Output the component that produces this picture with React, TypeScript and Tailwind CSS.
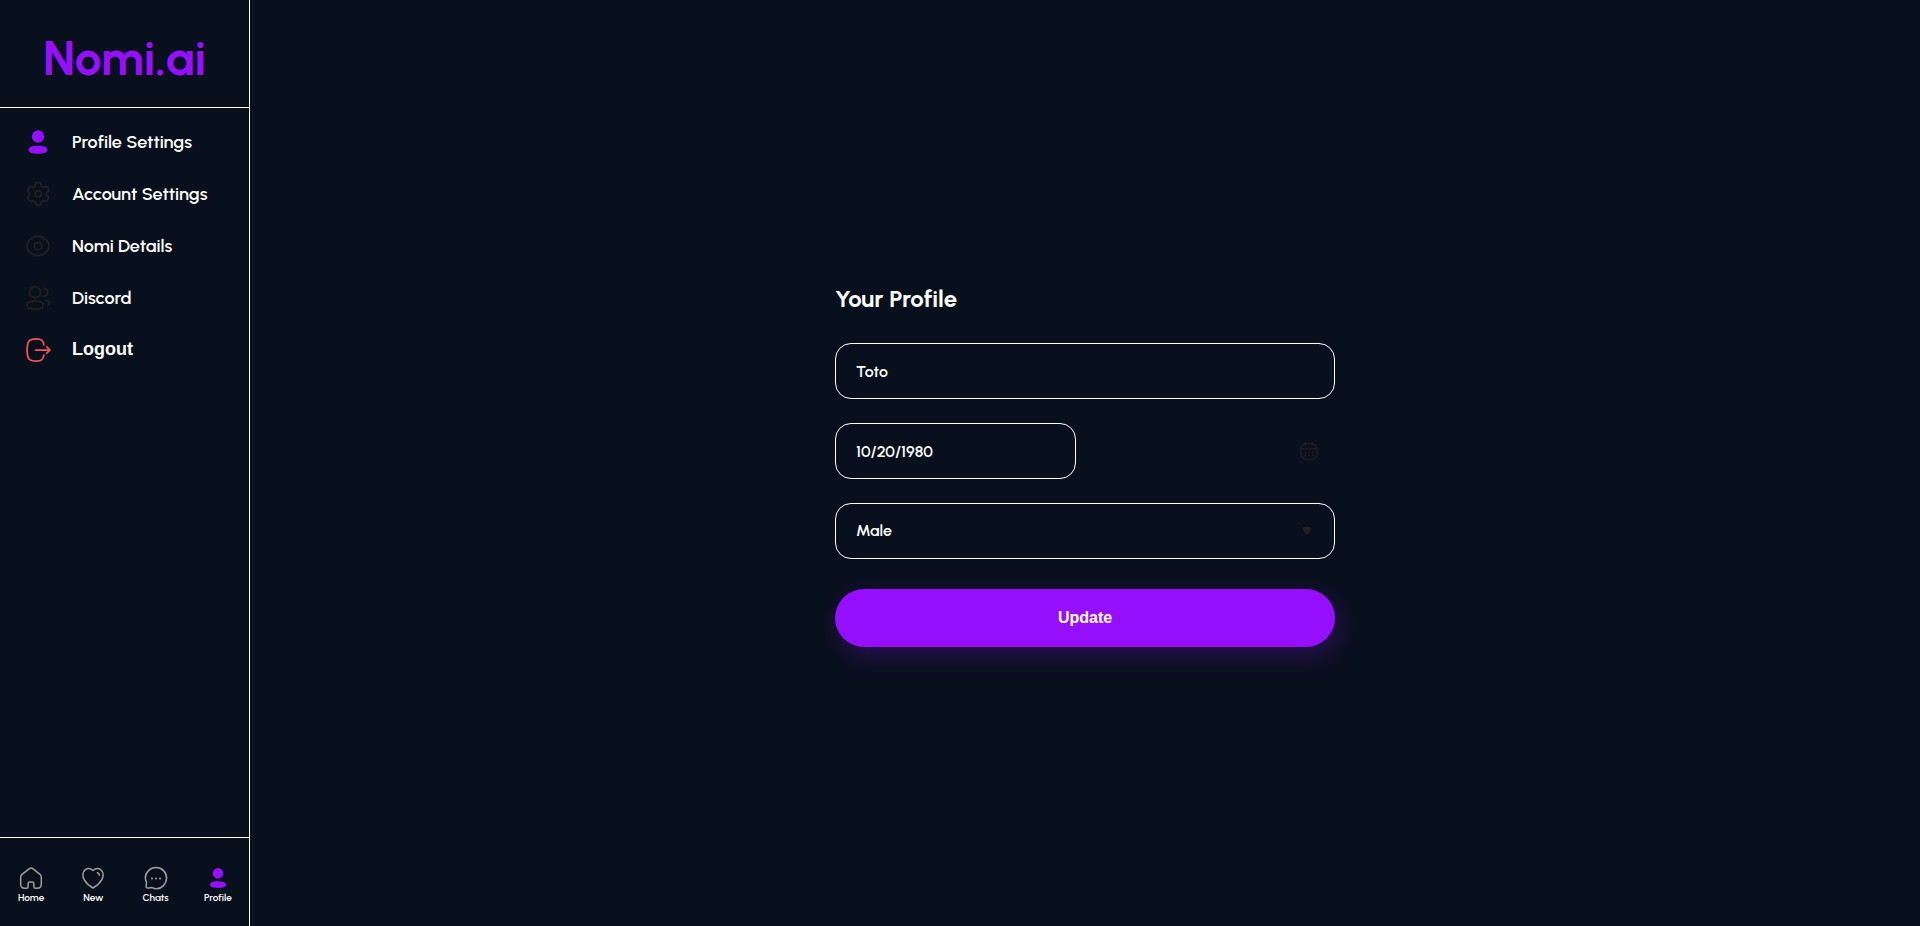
import { useState, type ReactNode } from "react";

type IconProps = { className?: string };

function Icon({ className, children }: IconProps & { children: ReactNode }) {
  return (
    <svg
      viewBox="0 0 24 24"
      fill="none"
      stroke="currentColor"
      strokeWidth="1.5"
      strokeLinecap="round"
      strokeLinejoin="round"
      aria-hidden="true"
      className={className}
    >
      {children}
    </svg>
  );
}

const ProfileIcon = ({ className }: IconProps) => (
  <Icon className={className}>
    <g fill="currentColor" stroke="none">
      <circle cx="12" cy="7.3" r="5.3" />
      <path d="M12 15.2c-4.3 0-8 .7-8 3.4S7.700 22 12 22s8-.7 8-3.400-3.700-3.400-8-3.400Z" />
    </g>
  </Icon>
);

const GearIcon = ({ className }: IconProps) => (
  <Icon className={className}>
    <path d="M20.8064 7.62361L20.184 6.54352C19.6574 5.6296 18.4905 5.31432 17.5753 5.83872C17.1397 6.09534 16.6198 6.16815 16.1305 6.04109C15.6411 5.91402 15.2224 5.59752 14.9666 5.16137C14.8021 4.88415 14.7137 4.56839 14.7103 4.24604C14.7251 3.72922 14.5302 3.2284 14.1698 2.85767C13.8094 2.48694 13.3143 2.27786 12.7973 2.27808H11.5433C11.0367 2.27807 10.5511 2.47991 10.1938 2.83895C9.83644 3.19798 9.63693 3.68459 9.63937 4.19112C9.62435 5.23693 8.77224 6.07681 7.72632 6.0767C7.40397 6.07336 7.08821 5.98494 6.81099 5.82041C5.89582 5.29601 4.72887 5.61129 4.20229 6.52522L3.5341 7.62361C3.00817 8.53639 3.31916 9.70261 4.22975 10.2323C4.82166 10.574 5.18629 11.2056 5.18629 11.8891C5.18629 12.5725 4.82166 13.2041 4.22975 13.5458C3.32031 14.0719 3.00898 15.2353 3.5341 16.1454L4.16568 17.2346C4.4124 17.6798 4.82636 18.0083 5.31595 18.1474C5.80554 18.2866 6.3304 18.2249 6.77438 17.976C7.21084 17.7213 7.73094 17.6516 8.2191 17.7822C8.70725 17.9128 9.12299 18.233 9.37392 18.6717C9.53845 18.9489 9.62686 19.2646 9.63021 19.587C9.63021 20.6435 10.4867 21.5 11.5433 21.5H12.7973C13.8502 21.5 14.7053 20.6491 14.7103 19.5962C14.7079 19.088 14.9086 18.6 15.2679 18.2407C15.6272 17.8814 16.1152 17.6807 16.6233 17.6831C16.9449 17.6917 17.2594 17.7798 17.5387 17.9394C18.4515 18.4653 19.6177 18.1544 20.1474 17.2438L20.8064 16.1454C21.0615 15.7075 21.1315 15.186 21.001 14.6964C20.8704 14.2067 20.55 13.7894 20.1108 13.5367C19.6715 13.284 19.3511 12.8666 19.2206 12.3769C19.09 11.8873 19.16 11.3658 19.4151 10.928C19.581 10.6383 19.8211 10.3982 20.1108 10.2323C21.0159 9.70289 21.3262 8.54349 20.8064 7.63277V7.62361Z" />
    <circle cx="12.175" cy="11.889" r="2.636" />
  </Icon>
);

const EyeIcon = ({ className }: IconProps) => (
  <Icon className={className}>
    <path d="M2.500 12c0-4.200 4.500-8.300 9.500-8.300s9.500 4.100 9.500 8.300-4.500 8.300-9.500 8.300S2.500 16.200 2.500 12Z" />
    <circle cx="12" cy="12" r="3.200" />
  </Icon>
);

const UsersIcon = ({ className }: IconProps) => (
  <Icon className={className}>
    <circle cx="9.500" cy="7" r="4.700" />
    <path d="M9.500 14.600c-3.800 0-7 .7-7 3.500s3.100 3.600 7 3.600 7-.8 7-3.500-3.100-3.600-7-3.600Z" />
    <path d="M17.200 10.500a3.500 3.500 0 0 0 .7-6.800" />
    <path d="M19 14.300c1.500.2 2.700.8 2.700 2 0 .9-.5 1.400-1.400 1.700" />
  </Icon>
);

const LogoutIcon = ({ className }: IconProps) => (
  <Icon className={className}>
    <path d="M17 7.700c-.3-3.700-1.700-5.200-6.700-5.200-6.200 0-7.600 2.200-7.600 9.500s1.400 9.500 7.600 9.500c5 0 6.400-1.500 6.700-5.200" />
    <path d="M22 12H9.900" />
    <path d="m19.500 9.200 2.700 2.800-2.700 2.800" />
  </Icon>
);

const HomeIcon = ({ className }: IconProps) => (
  <Icon className={className}>
    <path d="M9.100 20.700v-3.100c0-.9.7-1.600 1.600-1.600h2.600c.9 0 1.600.7 1.600 1.600v3.100c0 1 .7 1.500 1.600 1.500h1.700c2.500 0 4.100-1.500 4.100-4V11c0-1-.5-2-1.300-2.700l-6.900-5.500c-1.200-1-2.900-1-4.100 0L3.100 8.300C2.200 9 1.700 10 1.700 11v7.200c0 2.500 1.600 4 4.100 4h1.700c.9 0 1.600-.6 1.600-1.500Z" />
  </Icon>
);

const HeartIcon = ({ className }: IconProps) => (
  <Icon className={className}>
    <path d="M12 22c-3.500-2-6.700-4.700-8.700-8.100C1.500 10.700 1 6 4.100 3.800 6.500 2.100 9.800 2.400 12 4.500c2.200-2.100 5.500-2.400 7.900-.7C23 6 22.500 10.700 20.700 13.900c-2 3.400-5.200 6.100-8.700 8.100Z" />
    <path d="M16.300 6.700c1.200.3 2 1.300 2.100 2.500" />
  </Icon>
);

const ChatIcon = ({ className }: IconProps) => (
  <Icon className={className}>
    <path d="M19.500 19.600c-3.100 3.100-7.700 3.800-11.400 2-.6-.2-4.700.9-5.600.1-.9-.9.200-5 0-5.600C.7 12.300 1.400 7.700 4.500 4.600c4-4 11-4 15 0 4.100 4.100 4 10.900 0 15Z" />
    <path strokeWidth="2" d="M16 12.400h.01M12 12.400h.01M8 12.400h.01" />
  </Icon>
);

const CalendarIcon = ({ className }: IconProps) => (
  <Icon className={className}>
    <path d="M2 12.800C2 5.600 4.400 3.200 12 3.200s10 2.400 10 9.600-2.400 9.700-10 9.700-10-2.500-10-9.700Z" />
    <path d="M2.400 9.300h19.200M7.500 1.500v3.300M16.500 1.500v3.300" />
    <path strokeWidth="2" d="M16.400 13.200h.01M12 13.200h.01M7.600 13.200h.01M16.400 17.300h.01M12 17.300h.01M7.600 17.300h.01" />
  </Icon>
);

const menu = [
  { label: "Profile Settings", icon: ProfileIcon, color: "text-[#9610ff]" },
  { label: "Account Settings", icon: GearIcon, color: "text-[#212121]" },
  { label: "Nomi Details", icon: EyeIcon, color: "text-[#212121]" },
  { label: "Discord", icon: UsersIcon, color: "text-[#212121]" },
];

const tabs = [
  { label: "Home", icon: HomeIcon, color: "text-[#9e9e9e]" },
  { label: "New", icon: HeartIcon, color: "text-[#9e9e9e]" },
  { label: "Chats", icon: ChatIcon, color: "text-[#9e9e9e]" },
  { label: "Profile", icon: ProfileIcon, color: "text-[#9610ff]" },
];

const field =
  "h-14 rounded-2xl border border-white bg-transparent px-5 text-base font-semibold text-white outline-none";

export default function App() {
  const [name, setName] = useState("Toto");
  const [birthday, setBirthday] = useState("10/20/1980");
  const [gender, setGender] = useState("Male");

  return (
    <div className="flex min-h-screen bg-[#09101d] font-['Urbanist','Lato',sans-serif] text-white">
      <aside className="flex w-[250px] shrink-0 flex-col border-r border-white">
        <header className="flex h-[108px] items-center justify-center border-b border-white pt-2">
          <a href="#home" className="text-5xl font-bold text-[#9610ff]">
            Nomi.ai
          </a>
        </header>

        <nav aria-label="Settings" className="flex flex-1 flex-col gap-6 px-6 pt-5">
          {menu.map(({ label, icon: Glyph, color }) => (
            <a key={label} href="#settings" className="flex h-7 items-center gap-5">
              <Glyph className={`size-7 ${color}`} />
              <span className="text-lg leading-7 font-semibold">{label}</span>
            </a>
          ))}
          <button type="button" className="flex h-7 items-center gap-5">
            <LogoutIcon className="size-7 text-[#f75555]" />
            <span className="pb-0.5 font-['Liberation_Sans',sans-serif] text-lg leading-6 font-bold">Logout</span>
          </button>
        </nav>

        <nav aria-label="Main" className="grid h-[89px] grid-cols-4 items-center border-t border-white">
          {tabs.map(({ label, icon: Glyph, color }) => (
            <a key={label} href="#tab" className="flex flex-col items-center gap-0.5 pt-1.5">
              <Glyph className={`size-6 ${color}`} />
              <span className="text-[10px] leading-3 font-semibold">{label}</span>
            </a>
          ))}
        </nav>
      </aside>

      <main className="flex flex-1 items-center justify-center px-6">
        <form className="flex w-full max-w-[500px] flex-col gap-6" onSubmit={(e) => e.preventDefault()}>
          <h1 className="text-2xl leading-10 font-bold">Your Profile</h1>

          <input
            aria-label="Name"
            className={`${field} w-full`}
            value={name}
            onChange={(e) => setName(e.target.value)}
          />

          <div className="flex items-center justify-between pr-4">
            <input
              aria-label="Birthday"
              className={`${field} w-[241px]`}
              value={birthday}
              onChange={(e) => setBirthday(e.target.value)}
            />
            <button type="button" aria-label="Open calendar">
              <CalendarIcon className="size-5 text-[#212121]" />
            </button>
          </div>

          <div className="relative">
            <select
              aria-label="Gender"
              className={`${field} w-full appearance-none`}
              value={gender}
              onChange={(e) => setGender(e.target.value)}
            >
              <option>Male</option>
              <option>Female</option>
              <option>Non-binary</option>
            </select>
            <svg
              viewBox="0 0 12 12"
              aria-hidden="true"
              className="pointer-events-none absolute top-1/2 right-5 size-4 -translate-y-1/2 text-[#212121]"
            >
              <path
                d="M4 2.500h4q2 0 1.700 1.700Q9 7 6.700 9.200q-.7.600-1.400 0Q3 7 2.300 4.200 2 2.500 4 2.500Z"
                fill="currentColor"
                stroke="#0b0c10"
              />
            </svg>
          </div>

          <button
            type="submit"
            className="mt-1.5 h-[58px] w-full rounded-full bg-[#9610ff] font-['Liberation_Sans',sans-serif] text-base font-bold shadow-[4px_8px_24px_rgba(150,16,255,0.25)]"
          >
            Update
          </button>
        </form>
      </main>
    </div>
  );
}
